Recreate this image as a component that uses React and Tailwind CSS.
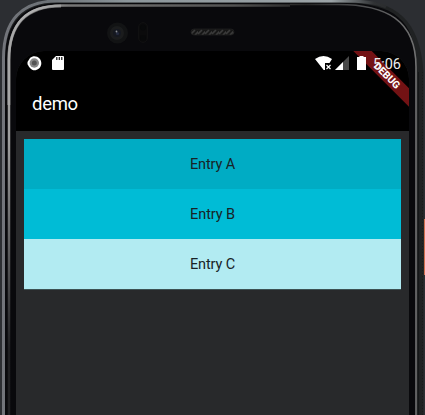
const entries = [
  { name: 'Entry A', color: 'bg-[#00acc4]' },
  { name: 'Entry B', color: 'bg-[#00bcd6]' },
  { name: 'Entry C', color: 'bg-[#b2ebf2]' },
];

function PhoneFrame() {
  return (
    <svg className="absolute inset-0" width="425" height="415" viewBox="0 0 425 415" fill="none" aria-hidden="true">
      <defs>
        <linearGradient id="outer" x1="0" y1="0" x2="425" y2="0" gradientUnits="userSpaceOnUse">
          <stop offset="0" stopColor="#73757b" />
          <stop offset=".12" stopColor="#6c7176" />
          <stop offset=".3" stopColor="#8c969b" />
          <stop offset=".78" stopColor="#9ba3a7" />
          <stop offset=".88" stopColor="#303234" />
          <stop offset="1" stopColor="#191a1c" />
        </linearGradient>
        <linearGradient id="inner" x1="0" y1="0" x2="425" y2="0" gradientUnits="userSpaceOnUse">
          <stop offset="0" stopColor="#929292" />
          <stop offset=".07" stopColor="#bdbdbd" />
          <stop offset=".16" stopColor="#777" />
          <stop offset=".55" stopColor="#525252" />
          <stop offset=".72" stopColor="#242424" />
          <stop offset=".84" stopColor="#4a4b4d" />
          <stop offset="1" stopColor="#777" />
        </linearGradient>
        <linearGradient id="sideFade" x1="0" y1="140" x2="0" y2="350" gradientUnits="userSpaceOnUse">
          <stop stopColor="#09090c" stopOpacity="0" />
          <stop offset="1" stopColor="#09090c" stopOpacity=".85" />
        </linearGradient>
        <pattern id="mesh" width="7" height="6" patternUnits="userSpaceOnUse" x="191" y="29">
          <rect width="7" height="6" fill="#161616" />
          <path d="M0 5 4 1M4 6 8 2" stroke="#3a3a3a" strokeWidth="1.7" />
        </pattern>
      </defs>
      <path d="M2 416V58C2 20 20 0 56 0H350C396 0 420 20 423.500 72V416Z" fill="#202223" />
      <path d="M5 416V60C5 22 24 3 60 3H345C393 3 416 20 416 67V416Z" fill="#09090c" />
      <path d="M3.500 416V58C3.500 21 21 1 57 1H340C362 1 376 2 386 7" stroke="url(#outer)" strokeWidth="3" />
      <path d="M9 416V60C9 24 25 5.500 62 5.500H290" stroke="url(#inner)" strokeWidth="2.500" />
      <path d="M290 4.500H338C386 4.500 416 20 416 67V416" stroke="url(#inner)" strokeWidth="1.600" />
      <path d="M8.800 105V60C8.800 25 26 6 61 6" stroke="#aaa" strokeWidth="3" opacity=".65" />
      <path d="M7 140h4v276H7Z" fill="url(#sideFade)" />
      <path d="M418.500 72V416" stroke="#151718" strokeWidth="1" />
      <path d="M422.500 72V416" stroke="#191b1b" strokeWidth="1" strokeDasharray="1 2" />
      <circle cx="117.500" cy="33" r="10.500" fill="#121314" />
      <circle cx="117" cy="33" r="7" fill="#1b1c1d" />
      <circle cx="117" cy="33" r="4" fill="#151820" />
      <circle cx="117.500" cy="33.500" r="1.600" fill="#252b40" />
      <circle cx="116.500" cy="31.500" r=".9" fill="#8c9095" />
      <rect x="138.500" y="22.500" width="9" height="20" rx="4.500" fill="#0b0b0c" stroke="#101011" />
      <circle cx="143" cy="27.500" r="3" fill="#08090a" />
      <circle cx="143" cy="38" r="3" fill="#08090a" />
      <rect x="191" y="29" width="43" height="6" rx="3" fill="url(#mesh)" stroke="#222" strokeWidth=".7" />
      <rect x="424" y="219" width="1" height="56" fill="#d16d4d" />
    </svg>
  );
}

function StatusBar() {
  return (
    <div className="flex h-6 items-start justify-between pt-[5px] pl-[11px] pr-2">
      <div className="flex gap-[10px]">
        <svg width="15" height="15" viewBox="0 0 15 15">
          <path d="M3 2C6-.5 10 0 12.500 2.500S15 10 12 12.500 5.500 15 3 12 1.500 9 .5 8.500V6Z" fill="#fff" />
          <circle cx="7.300" cy="7" r="4.700" fill="#888" />
          <circle cx="7.300" cy="7" r="2.500" fill="#555" />
        </svg>
        <svg width="12" height="15" viewBox="0 0 12 15">
          <path d="M4 0h7q1 0 1 1v12q0 1-1 1H1q-1 0-1-1V4Z" fill="#fff" />
          <path d="M4.800 1v3M7.300 1v3M9.800 1v3" stroke="#111" strokeWidth="1.200" />
        </svg>
      </div>
      <div className="flex">
        <svg className="mr-[3px]" width="17" height="15" viewBox="0 0 17 15">
          <path d="M0 3Q8.500-3 17 3L14.500 7H10v7L8.700 14Z" fill="#fff" />
          <path d="m11.500 9 4 4m0-4-4 4" stroke="#fff" strokeWidth="1.200" />
        </svg>
        <svg className="mr-2" width="14" height="14" viewBox="0 0 14 14">
          <path d="M0 14 14 0V14Z" fill="#484848" />
          <path d="M0 14 8 6V14Z" fill="#fff" />
        </svg>
        <svg className="relative z-20 mr-[7px]" width="9" height="14" viewBox="0 0 9 14">
          <path d="M2.500 0h4v1H9v13H0V1h2.500Z" fill="#fff" />
        </svg>
        <span className="relative z-20 w-[28px] text-[14.5px] leading-[17px] whitespace-nowrap text-[#eee]">5:06</span>
      </div>
    </div>
  );
}

function DebugBanner() {
  return (
    <div className="absolute top-0 right-0 z-10 h-[57px] w-[57px] overflow-hidden">
      <div className="absolute top-[16.5px] left-[-16.5px] flex h-[13px] w-[100px] rotate-45 items-center justify-center bg-[#731214] pl-[3px] text-[10.2px] leading-[13px] font-extrabold tracking-[-0.1px] text-white">
        DEBUG
      </div>
    </div>
  );
}

export default function App() {
  return (
    <div className="relative h-[415px] w-[425px] overflow-hidden bg-[#2c2e32] pt-[51px] pr-4 pl-4 font-['Roboto',sans-serif]">
      <PhoneFrame />
      <main className="relative flex h-[364px] w-[393px] flex-col overflow-hidden rounded-t-[28px] bg-[#28292b]">
        <header className="h-20 bg-black text-white">
          <StatusBar />
          <h1 className="pt-[17px] pl-4 text-[18.5px] leading-6 font-normal tracking-[-0.3px]">demo</h1>
        </header>
        <DebugBanner />
        <section className="p-2">
          <ul className="border-b border-[#3d5254]">
            {entries.map((entry) => (
              <li key={entry.name} className={`flex h-[50px] items-center justify-center pt-px text-[14.5px] tracking-[-0.1px] text-[#182326] ${entry.color}`}>
                {entry.name}
              </li>
            ))}
          </ul>
        </section>
      </main>
    </div>
  );
}
